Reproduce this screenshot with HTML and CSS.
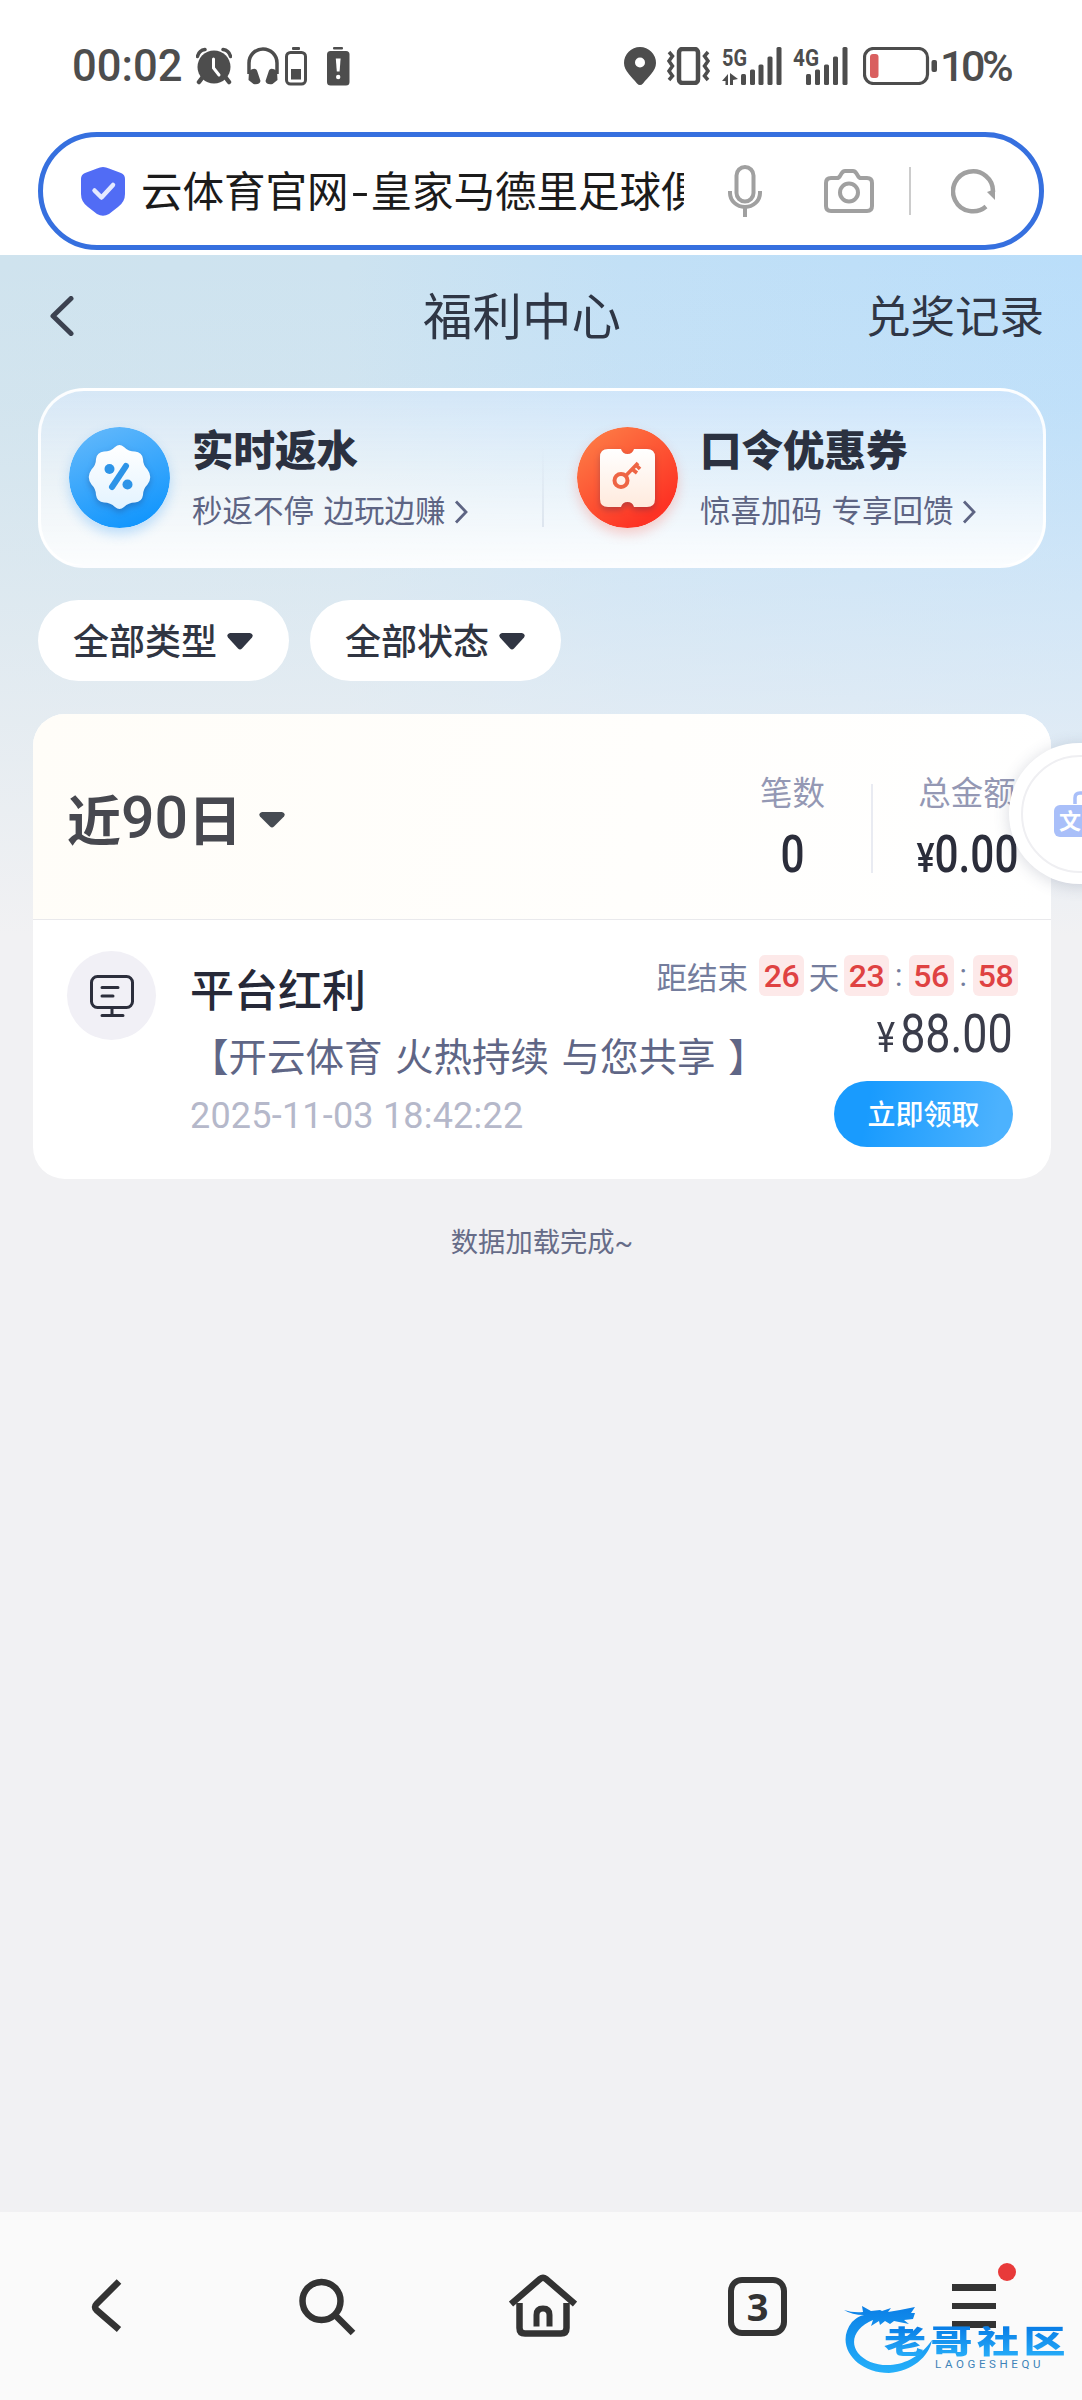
FILE: index.html
```html
<!DOCTYPE html>
<html lang="zh-CN">
<head>
    <meta charset="UTF-8">
    <meta name="viewport" content="width=device-width, initial-scale=1.0">
    <title>福利中心</title>
    <link rel="stylesheet" href="styles.css">
</head>
<body>
    <div class="screen">
        <div class="status-bar">
            <span class="clock">00:02</span>
            <svg class="ic-alarm" width="36" height="38" viewBox="0 0 36 38" fill="#4d4d4d">
                <circle cx="18" cy="20" r="16.5"/>
                <path d="M1.500 9.500A9 9 0 0 1 9 2.500M34.500 9.500A9 9 0 0 0 27 2.500" fill="none" stroke="#4d4d4d" stroke-width="3.500" stroke-linecap="round"/>
                <path d="M6 31l-3 4M30 31l3 4" stroke="#4d4d4d" stroke-width="4.500" stroke-linecap="round"/>
                <path d="M17.500 12v9l5.500 7" fill="none" stroke="#fff" stroke-width="3" stroke-linecap="round"/>
            </svg>
            <svg class="ic-headphones" width="34" height="38" viewBox="0 0 34 38">
                <path d="M3 27V16a14 14 0 0 1 28 0v11" fill="none" stroke="#4d4d4d" stroke-width="3.500"/>
                <path d="M3 24q7-5 8.500 1l3 9q-1 4-7 3l-5-4zM31 24q-7-5-8.500 1l-3 9q1 4 7 3l5-4z" fill="#4d4d4d"/>
            </svg>
            <svg class="ic-device-battery" width="22" height="40" viewBox="0 0 22 40">
                <rect x="7" y="1" width="8" height="3" rx="1" fill="#4d4d4d"/>
                <rect x="1.500" y="6.500" width="19" height="31.500" rx="4" fill="none" stroke="#4d4d4d" stroke-width="3"/>
                <rect x="6" y="23" width="10" height="10.500" fill="#4d4d4d"/>
            </svg>
            <svg class="ic-alert-battery" width="23" height="40" viewBox="0 0 23 40">
                <rect x="6" y="1" width="10" height="2.500" rx="1" fill="#4d4d4d"/>
                <rect x="0" y="5" width="22.500" height="34.500" rx="3.500" fill="#4d4d4d"/>
                <path d="M8.800 12.500h4.800l-1 13h-2.800z" fill="#fff"/>
                <circle cx="11.200" cy="31" r="2.200" fill="#fff"/>
            </svg>
            <div class="status-right">
                <svg width="32" height="38" viewBox="0 0 32 38">
                    <path d="M16 0A16 16 0 0 1 32 16c0 8-8 14-13 20.500q-3 3-6 0C8 30 0 24 0 16A16 16 0 0 1 16 0z" fill="#4d4d4d"/>
                    <circle cx="16" cy="15.500" r="5" fill="#fff"/>
                </svg>
                <svg class="ic-vibrate" width="45" height="38" viewBox="0 0 45 38" fill="none" stroke="#4d4d4d">
                    <rect x="13" y="2" width="19" height="34" rx="3.500" stroke-width="4.500"/>
                    <path d="M3 5l3.500 4L3 14l3.500 5L3 24l3.500 5L3 33M42 5l-3.500 4 3.500 5-3.500 5 3.500 5-3.500 5 3.500 4" stroke-width="3.500"/>
                </svg>
                <svg class="ic-signal" width="60" height="38" viewBox="0 0 60 38" fill="#4d4d4d">
                    <text class="net-label" x="0" y="18.500" textLength="25" lengthAdjust="spacingAndGlyphs">5G</text>
                    <path d="M0 34l6-7v11H3.500v-4zM8 26l8 6-5 1v5H8z"/>
                    <rect x="19" y="27" width="5" height="11" rx="1.500"/>
                    <rect x="28" y="22.500" width="5" height="15.500" rx="1.500"/>
                    <rect x="36.500" y="17.500" width="5" height="20.500" rx="1.500"/>
                    <rect x="45.500" y="9.500" width="5" height="28.500" rx="1.500"/>
                    <rect x="54.500" y="0" width="5" height="38" rx="1.500"/>
                </svg>
                <svg class="ic-signal" width="55" height="38" viewBox="0 0 55 38" fill="#4d4d4d">
                    <text class="net-label" x="0" y="18.500" textLength="26" lengthAdjust="spacingAndGlyphs">4G</text>
                    <rect x="13" y="27" width="5" height="11" rx="1.500"/>
                    <rect x="22" y="22.500" width="5" height="15.500" rx="1.500"/>
                    <rect x="31" y="17.500" width="5" height="20.500" rx="1.500"/>
                    <rect x="40" y="9.500" width="5" height="28.500" rx="1.500"/>
                    <rect x="49.500" y="0" width="5" height="38" rx="1.500"/>
                </svg>
                <svg class="ic-battery" width="75" height="38" viewBox="0 0 75 38">
                    <rect x="1.500" y="1.500" width="63" height="35" rx="9" fill="none" stroke="#4d4d4d" stroke-width="3.200"/>
                    <rect x="7" y="7" width="8.500" height="24" rx="3" fill="#d95f5f"/>
                    <rect x="68.500" y="13" width="5.500" height="12" rx="2" fill="#4d4d4d"/>
                </svg>
                <span class="percent">10%</span>
            </div>
        </div>

        <div class="address-bar">
            <svg class="shield" width="46" height="50" viewBox="0 0 46 50">
                <path d="M17 2.500q6-3 12 0l12 4.500q4 1.500 4 6v15q0 8-7 13l-9 7q-6 3.500-12 0l-9-7q-7-5-7-13V13q0-4.500 4-6z" fill="#516cf5"/>
                <path d="M14.500 24.500l7 7L33 19" fill="none" stroke="#e4e9ff" stroke-width="4.500" stroke-linecap="round" stroke-linejoin="round"/>
            </svg>
            <div class="address-text">云体育官网<span class="dash">-</span>皇家马德里足球俱</div>
            <svg class="mic" width="34" height="52" viewBox="0 0 34 52" fill="none" stroke="#a0a0a0" stroke-width="4">
                <rect x="8.500" y="2" width="17" height="34.500" rx="8.500"/>
                <path d="M2 26v2a15 14 0 0 0 30 0v-2M17 42v10"/>
            </svg>
            <svg class="camera" width="50" height="44" viewBox="0 0 50 44" fill="none" stroke="#a0a0a0" stroke-width="4" stroke-linejoin="round">
                <path d="M7 9h6q2 0 3-2l1.500-2.500Q19 2 21 2h8q2 0 3.500 2.500L34 7q1 2 3 2h6q5 0 5 5v23q0 5-5 5H7q-5 0-5-5V14q0-5 5-5z"/>
                <circle cx="25" cy="23.500" r="9"/>
            </svg>
            <span class="address-divider"></span>
            <svg class="reload" width="46" height="46" viewBox="0 0 46 46">
                <path d="M35 38.500A20 20 0 1 1 42 24" fill="none" stroke="#a0a0a0" stroke-width="4.500"/>
                <path d="M36 24l8-3v11z" fill="#a0a0a0"/>
            </svg>
        </div>

        <div class="page">
            <div class="nav">
                <svg width="24" height="40" viewBox="0 0 24 40">
                    <path d="M21 2.500L3 20l18 17.500" fill="none" stroke="#3c4250" stroke-width="5" stroke-linecap="round" stroke-linejoin="round"/>
                </svg>
                <h1>福利中心</h1>
                <a class="nav-link">兑奖记录</a>
            </div>

            <div class="benefits">
                <div class="benefit">
                    <svg class="benefit-icon blue" width="101" height="101" viewBox="0 0 101 101">
                        <defs>
                            <linearGradient id="blue" x1="0.200" y1="0" x2="0.600" y2="1">
                                <stop offset="0" stop-color="#62b8fb"/>
                                <stop offset="1" stop-color="#1296fd"/>
                            </linearGradient>
                            <linearGradient id="badge" x1="0" y1="0" x2="0" y2="1">
                                <stop offset="0" stop-color="#fff"/>
                                <stop offset="1" stop-color="#e3f3ff"/>
                            </linearGradient>
                        </defs>
                        <circle cx="50.500" cy="50.500" r="50.500" fill="url(#blue)"/>
                        <path class="badge" fill="url(#badge)" d="M46 20q4.500-4 9 0 4.500 4.500 11 4.500 7 .5 8 7.500 0 6 4.500 10.500 5.500 7.500 0 15-4.500 4.500-4.500 10.500-1 7-8 7.500-6.500 0-11 4.500-4.500 4-9 0-4.500-4.500-11-4.500-7-.5-8-7.500 0-6-4.500-10.500-5.500-7.500 0-15 4.500-4.500 4.500-10.500 1-7 8-7.500 6.500 0 11-4.500z"/>
                        <path d="M57 39L43 60" stroke="#2d94e8" stroke-width="6" stroke-linecap="round"/>
                        <circle cx="40.500" cy="42" r="5" fill="#2d94e8"/>
                        <circle cx="58.500" cy="57.500" r="5" fill="#2d94e8"/>
                    </svg>
                    <div class="benefit-text">
                        <h2>实时返水</h2>
                        <p>秒返不停 边玩边赚
                            <svg width="14" height="24" viewBox="0 0 14 24"><path d="M2 1.500L12 12 2 22.500" fill="none" stroke="#5d6483" stroke-width="2.800"/></svg>
                        </p>
                    </div>
                </div>
                <div class="benefit-divider"></div>
                <div class="benefit second">
                    <svg class="benefit-icon red" width="101" height="101" viewBox="0 0 101 101">
                        <defs>
                            <linearGradient id="red" x1="0.100" y1="0.100" x2="0.700" y2="0.900">
                                <stop offset="0" stop-color="#fd7a45"/>
                                <stop offset="1" stop-color="#fd3324"/>
                            </linearGradient>
                            <linearGradient id="ticket" x1="0" y1="0" x2="0" y2="1">
                                <stop offset="0" stop-color="#fff"/>
                                <stop offset="1" stop-color="#ffeadd"/>
                            </linearGradient>
                        </defs>
                        <circle cx="50.500" cy="50.500" r="50.500" fill="url(#red)"/>
                        <path class="badge" fill="url(#ticket)" d="M31 22h13q1.500 5 6.500 5t6.500-5h13q8 0 8 8v42q0 8-8 8H57q-1.500-5-6.500-5T44 80H31q-8 0-8-8V30q0-8 8-8z"/>
                        <circle cx="44" cy="53.500" r="6.500" fill="none" stroke="#ee6545" stroke-width="4"/>
                        <path d="M49 48.500L61 36M55 42l5 4M59 38l4 4" stroke="#ee6545" stroke-width="3.600" fill="none"/>
                    </svg>
                    <div class="benefit-text">
                        <h2>口令优惠券</h2>
                        <p>惊喜加码 专享回馈
                            <svg width="14" height="24" viewBox="0 0 14 24"><path d="M2 1.500L12 12 2 22.500" fill="none" stroke="#5d6483" stroke-width="2.800"/></svg>
                        </p>
                    </div>
                </div>
            </div>

            <div class="filters">
                <button class="filter">全部类型
                    <svg width="26" height="17" viewBox="0 0 26 17"><path d="M3 0h20q4 1 2 4.500L15 15.500q-2 2-4 0L1 4.500Q-1 1 3 0z" fill="#303542"/></svg>
                </button>
                <button class="filter">全部状态
                    <svg width="26" height="17" viewBox="0 0 26 17"><path d="M3 0h20q4 1 2 4.500L15 15.500q-2 2-4 0L1 4.500Q-1 1 3 0z" fill="#303542"/></svg>
                </button>
            </div>

            <div class="card">
                <div class="summary">
                    <div class="range">近<span>90</span>日
                        <svg width="26" height="16" viewBox="0 0 26 16"><path d="M3 0h20q4 1 2 4.500L15 14.500q-2 2-4 0L1 4.500Q-1 1 3 0z" fill="#464b52"/></svg>
                    </div>
                    <div class="stat">
                        <span class="stat-label">笔数</span>
                        <span class="stat-value">0</span>
                    </div>
                    <div class="stat-divider"></div>
                    <div class="stat total">
                        <span class="stat-label">总金额</span>
                        <span class="stat-value"><small>¥</small>0.00</span>
                    </div>
                </div>

                <div class="record">
                    <div class="record-icon">
                        <svg width="44" height="42" viewBox="0 0 44 42" fill="none" stroke="#2c2e3c" stroke-width="3" stroke-linecap="round">
                            <rect x="1.500" y="1.500" width="41" height="31" rx="6"/>
                            <path d="M12 12.500h16M12 21h11M22 33v7M12 40.500h21"/>
                        </svg>
                    </div>
                    <div class="record-info">
                        <h3>平台红利</h3>
                        <p class="record-desc">【开云体育 火热持续 与您共享 】</p>
                        <p class="record-time">2025-11-03 18:42:22</p>
                    </div>
                    <div class="record-side">
                        <div class="countdown">
                            <span class="countdown-label">距结束</span>
                            <b>26</b><span class="day">天</span><b>23</b><span class="colon">:</span><b>56</b><span class="colon">:</span><b>58</b>
                        </div>
                        <div class="amount"><small>¥</small>88.00</div>
                        <button class="claim">立即领取</button>
                    </div>
                </div>
            </div>

            <p class="load-end">数据加载完成~</p>
        </div>

        <div class="tab-bar">
            <svg class="tab-back" width="67" height="67" viewBox="0 0 67 67" fill="none" stroke="#333" stroke-width="6.500">
                <path d="M47 9.500L24.500 32q-3 3 0 6L47 57.500" transform="translate(0 -1)"/>
            </svg>
            <svg class="tab-search" width="67" height="67" viewBox="0 0 67 67" fill="none" stroke="#333" stroke-width="6.500">
                <circle cx="28.500" cy="28" r="19"/>
                <path d="M42 42l18 18"/>
            </svg>
            <svg class="tab-home" width="68" height="67" viewBox="0 0 68 67" fill="none" stroke="#333" stroke-width="6.500">
                <path d="M2 31L31 6q3-2.500 6 0l29 25"/>
                <path d="M10.500 30v25q0 5.500 5.500 5.500h36q5.500 0 5.500-5.500V30"/>
                <path d="M27.500 53.500V42q0-6.500 6.500-6.500t6.500 6.500v11.500" stroke-width="6"/>
            </svg>
            <div class="tabs">3</div>
            <div class="menu">
                <span></span><span></span><span></span>
                <i class="red-dot"></i>
            </div>
        </div>

        <div class="float-button">
            <div class="float-ring">
                <svg width="48" height="50" viewBox="0 0 48 50">
                    <path d="M21 14V8q0-5 5-5h8" fill="none" stroke="#a9bff9" stroke-width="3.500"/>
                    <rect x="0" y="15" width="34" height="32" rx="6" fill="#a9bff9"/>
                    <text x="5" y="39">文</text>
                </svg>
            </div>
        </div>

        <div class="watermark">
            <svg width="90" height="70" viewBox="0 0 90 70">
                <defs>
                    <linearGradient id="dragon" x1="0" y1="0" x2="0" y2="1">
                        <stop offset="0" stop-color="#0b7fe6"/>
                        <stop offset="1" stop-color="#25b0fa"/>
                    </linearGradient>
                </defs>
                <path fill="url(#dragon)" d="M0 5q9 3 19 2l-1-6 9 5 9-1 2 1 9-3-3 4 12-2 15-3-4 6h4l-2 6-9 1 5 4-10-2-5-1-4 3-5-3-5 4-1-4-8 5 2-6C12 22 5 36 14 48c14 17 52 19 74-13-3 17-20 31-43 33C12 68-10 40 8 17q6-6 12-7Q8 10 0 5z"/>
            </svg>
            <div class="watermark-name">老哥社区</div>
            <div class="watermark-latin">LAOGESHEQU</div>
        </div>
    </div>
</body>
</html>
```

FILE: styles.css
```css
* {
    box-sizing: border-box;
}

body {
    margin: 0;
    background: #fff;
    font-family: Roboto, "Noto Sans CJK SC", sans-serif;
    color: #2f3645;
}

h1, h2, h3, p {
    margin: 0;
    font-weight: 400;
}

button {
    border: none;
    padding: 0;
    font-family: inherit;
    color: inherit;
}

svg {
    display: block;
    flex-shrink: 0;
}

.screen {
    position: relative;
    display: flex;
    flex-direction: column;
    width: 1082px;
    height: 2400px;
    overflow: hidden;
}

/* Status bar */
.status-bar {
    display: flex;
    align-items: center;
    height: 132px;
    padding: 0 67px 0 72px;
    color: #4d4d4d;
    font-weight: 500;
}

.clock {
    width: 113px;
    font-size: 43.5px;
    white-space: nowrap;
}

.ic-alarm {
    margin-left: 11px;
}

.ic-headphones {
    margin-left: 14px;
}

.ic-device-battery {
    margin-left: 5px;
}

.ic-alert-battery {
    margin-left: 20px;
}

.status-right {
    display: flex;
    align-items: center;
    margin-left: auto;
}

.ic-vibrate {
    margin-left: 10px;
}

.ic-signal {
    margin-left: 11px;
}

.net-label {
    font-size: 24px;
    font-weight: 700;
}

.ic-battery {
    margin-left: 15px;
}

.percent {
    width: 75px;
    margin-left: 2px;
    font-size: 43px;
    letter-spacing: -3.5px;
    white-space: nowrap;
}

/* Address bar */
.address-bar {
    display: flex;
    align-items: center;
    height: 118px;
    margin: 0 38px 5px;
    padding: 0 42px 0 37px;
    border: 5px solid #3670df;
    border-radius: 59px;
    background: #fff;
}

.address-text {
    width: 544px;
    margin: 0 0 4px 15px;
    overflow: hidden;
    white-space: nowrap;
    font-size: 41.5px;
    color: #1b1b1b;
}

.dash {
    display: inline-block;
    width: 22px;
    text-align: center;
    transform: scaleX(1.4);
}

.mic {
    margin-left: 44px;
}

.camera {
    margin-left: 62px;
}

.address-divider {
    width: 2px;
    height: 48px;
    margin: 0 40px 0 35px;
    background: #ccc;
}

/* Page */
.page {
    flex: 1;
    padding: 0 36px 0 38px;
    background:
        linear-gradient(180deg, rgba(241, 241, 243, 0) 0, rgba(241, 241, 243, 0.1) 150px, rgba(241, 241, 243, 0.42) 340px, rgba(241, 241, 243, 0.62) 450px, #f1f1f3 680px),
        linear-gradient(90deg, #cfe3ee 0, #cde3f0 32%, #c2e0f6 58%, #badefa 100%);
}

.nav {
    display: grid;
    grid-template-columns: 373px 198px 1fr;
    align-items: center;
    height: 122px;
    padding: 0 2px 0 12px;
}

.nav h1 {
    margin-bottom: 6px;
    font-size: 49.5px;
    white-space: nowrap;
}

.nav-link {
    margin-bottom: 5px;
    text-align: right;
    font-size: 44.5px;
}

.benefits {
    display: flex;
    height: 180px;
    margin-top: 11px;
    border: 3px solid rgba(255, 255, 255, 0.9);
    border-radius: 46px;
    background: linear-gradient(180deg, rgba(220, 235, 255, 0.45), rgba(255, 255, 255, 0.5) 50%, rgba(255, 255, 255, 0.9));
}

.benefit {
    display: flex;
    width: 502px;
    padding: 36px 0 0 28px;
}

.benefit.second {
    padding-left: 33px;
}

.benefit-icon {
    border-radius: 50%;
}

.benefit-icon.blue {
    box-shadow: 0 6px 12px rgba(60, 160, 250, 0.3);
}

.benefit-icon.red {
    box-shadow: 0 6px 12px rgba(250, 80, 60, 0.25);
}

.badge {
    filter: drop-shadow(0 3px 3px rgba(40, 40, 90, 0.3));
}

.benefit-text {
    margin-left: 22px;
}

.benefit-text h2 {
    margin-top: -5px;
    font-size: 41.5px;
    line-height: 60px;
    font-weight: 900;
    color: #2b3140;
}

.benefit-text p {
    display: flex;
    align-items: center;
    gap: 8px;
    font-size: 30.5px;
    line-height: 60px;
    word-spacing: 2px;
    white-space: nowrap;
    color: #5d6483;
}

.benefit-divider {
    width: 2px;
    height: 80px;
    margin: 56px 0 0 2px;
    background: linear-gradient(180deg, rgba(200, 210, 225, 0), rgba(200, 210, 225, 0.5));
}

.filters {
    display: flex;
    gap: 21px;
    margin-top: 32px;
}

.filter {
    display: flex;
    align-items: center;
    gap: 10px;
    width: 251px;
    height: 81px;
    padding: 0 0 4px 35px;
    border-radius: 41px;
    background: #fff;
    font-size: 36px;
    font-weight: 500;
    white-space: nowrap;
    color: #303542;
}

.filter svg {
    margin-top: 5px;
}

/* Records card */
.card {
    height: 465px;
    margin: 33px -5px 0 -5px;
    border-radius: 32px;
    background: #fff;
    overflow: hidden;
}

.summary {
    display: flex;
    height: 206px;
    padding-right: 34px;
    border-bottom: 1px solid #e9e9ec;
    background: linear-gradient(100deg, #fffdf8, #fffefc 60%, #fff);
}

.range {
    display: flex;
    align-items: center;
    height: 206px;
    margin-right: auto;
    padding-left: 34px;
    font-size: 54px;
    font-weight: 600;
    white-space: nowrap;
    color: #47484f;
}

.range span {
    font-size: 59px;
    font-weight: 500;
}

.range svg {
    margin: 5px 0 0 17px;
}

.stat {
    display: flex;
    flex-direction: column;
    align-items: center;
    padding-top: 55px;
}

.stat-label {
    font-size: 32.5px;
    line-height: 50px;
    color: #9498b4;
}

.stat-value {
    font-size: 51px;
    line-height: 72px;
    font-weight: 500;
    transform: scaleX(0.83);
    color: #2b2d3a;
}

.stat-value small {
    font-size: 41px;
}

.total {
    width: 100px;
}

.stat-divider {
    width: 2px;
    height: 89px;
    margin: 70px 44px 0 46px;
    background: #e9ebf2;
}

.record {
    display: flex;
    height: 259px;
    padding-left: 34px;
}

.record-icon {
    display: flex;
    justify-content: center;
    align-items: center;
    width: 89px;
    height: 89px;
    margin-top: 31px;
    border-radius: 50%;
    background: #f1f0f6;
}

.record-info {
    width: 570px;
    margin: 41px 0 0 34px;
    white-space: nowrap;
}

.record-info h3 {
    font-size: 44px;
    line-height: 62px;
    font-weight: 500;
    color: #262938;
}

.record-desc {
    font-size: 38.5px;
    line-height: 70px;
    word-spacing: 3px;
    color: #5f6686;
}

.record-time {
    font-size: 36px;
    line-height: 46px;
    letter-spacing: 0.2px;
    color: #b5b8ca;
}

.record-side {
    display: flex;
    flex-direction: column;
    align-items: flex-end;
    width: 258px;
    margin-top: 35px;
}

.countdown {
    display: flex;
    align-items: center;
    height: 41px;
    font-size: 30.5px;
    white-space: nowrap;
    color: #747d9d;
}

.countdown b {
    width: 45px;
    height: 41px;
    border-radius: 6px;
    background: #fde9e9;
    text-align: center;
    font-size: 32px;
    line-height: 43px;
    font-weight: 500;
    letter-spacing: -0.5px;
    color: #df4242;
}

.countdown-label {
    margin-right: 11px;
}

.day {
    width: 40px;
    text-align: center;
}

.colon {
    width: 19.5px;
    text-align: center;
}

.amount {
    margin: 8px 5px 0 0;
    font-size: 54px;
    line-height: 60px;
    transform: scaleX(0.83);
    transform-origin: right;
    color: #3a3c4a;
}

.amount small {
    margin-right: 6px;
    font-size: 42px;
}

.claim {
    width: 179px;
    height: 66px;
    margin: 13px 5px 0 0;
    padding-bottom: 3px;
    border-radius: 33px;
    background: linear-gradient(100deg, #199bfe 20%, #4cb2fe 90%);
    font-size: 28px;
    font-weight: 500;
    color: #fff;
}

.load-end {
    margin-top: 44px;
    text-align: center;
    font-size: 27.3px;
    line-height: 40px;
    color: #666c88;
}

/* Browser toolbar */
.tab-bar {
    display: flex;
    align-items: center;
    height: 188px;
    padding-left: 72px;
    background: #fafafa;
}

.tab-search {
    margin-left: 154px;
}

.tab-home {
    margin-left: 149px;
}

.tabs {
    width: 59px;
    height: 59px;
    margin-left: 151px;
    border: 6px solid #333;
    border-radius: 14px;
    text-align: center;
    font-family: "Noto Sans", sans-serif;
    font-size: 38px;
    line-height: 47px;
    font-weight: 700;
    color: #333;
}

.menu {
    position: relative;
    display: flex;
    flex-direction: column;
    gap: 12px;
    width: 44px;
    margin-left: 165px;
}

.menu span {
    height: 6.5px;
    background: #333;
}

.red-dot {
    position: absolute;
    top: -21px;
    right: -20px;
    width: 18px;
    height: 18px;
    border-radius: 50%;
    background: #e83a3a;
}

/* Translate button docked at the screen edge */
.float-button {
    position: absolute;
    top: 743px;
    left: 1009px;
    display: flex;
    justify-content: center;
    align-items: center;
    width: 141px;
    height: 141px;
    border-radius: 50%;
    background: #fff;
    box-shadow: 0 2px 16px rgba(60, 70, 100, 0.2);
}

.float-ring {
    width: 118px;
    height: 118px;
    padding: 33px 0 0 31px;
    border: 2px solid #efeff2;
    border-radius: 50%;
}

.float-ring text {
    fill: #fff;
    font-size: 22px;
    font-weight: 700;
}

.watermark {
    position: absolute;
    top: 2305px;
    left: 844px;
    width: 238px;
    height: 75px;
}

.watermark svg {
    position: absolute;
}

.watermark-name {
    position: absolute;
    top: 16px;
    left: 40px;
    font-size: 42px;
    line-height: 42px;
    font-weight: 900;
    letter-spacing: 4.5px;
    white-space: nowrap;
    transform: scaleY(0.75);
    background: linear-gradient(180deg, #087ce6, #27aef9);
    -webkit-background-clip: text;
    background-clip: text;
    color: transparent;
}

.watermark-latin {
    position: absolute;
    top: 52px;
    left: 91px;
    font-size: 11.5px;
    line-height: 14px;
    letter-spacing: 3.6px;
    color: #3d83b8;
}
```
